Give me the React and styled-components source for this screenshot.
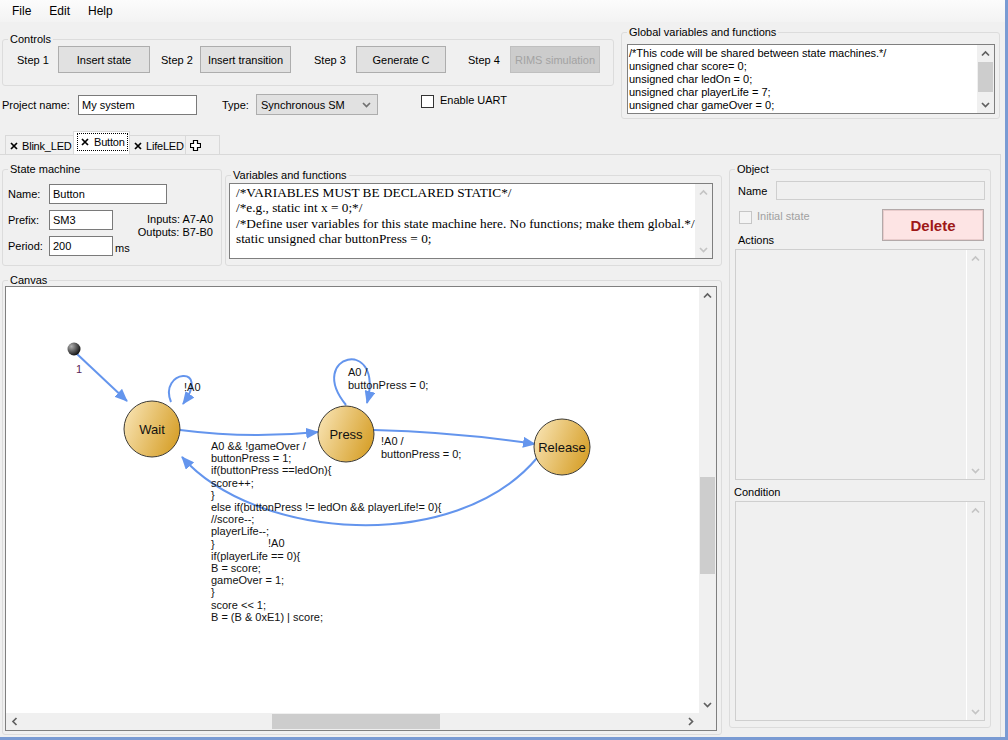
import React from "react";
import styled, { createGlobalStyle } from "styled-components";

const GlobalStyle = createGlobalStyle`
  html, body {
    margin: 0;
    padding: 0;
    background: #f0f0f0;
  }
  body {
    font-family: "Liberation Sans", Arial, sans-serif;
    font-size: 11px;
    color: #000;
  }
`;

const Window = styled.div`
  width: 1008px;
  height: 740px;
  box-sizing: border-box;
  background: #f0f0f0;
  border-right: 3px solid #7a9bd3;
  border-bottom: 3px solid #7a9bd3;
  display: flex;
  flex-direction: column;
  overflow: hidden;
`;

/* menu */
const MenuBar = styled.div`
  height: 22px;
  flex-shrink: 0;
  display: flex;
  align-items: center;
  padding-left: 3px;
  background: linear-gradient(#fcfcfc, #f3f3f3);
  font-size: 12px;
`;

const MenuItem = styled.span`
  padding: 0 9px;
`;

/* group boxes */
const GroupBox = styled.fieldset`
  margin: 0;
  padding: 0;
  min-width: 0;
  flex-shrink: 0;
  box-sizing: border-box;
  border: 1px solid #dcdcdc;
  border-radius: 3px;
`;

const Legend = styled.legend`
  margin-left: 5px;
  padding: 0 2px;
  font-size: 11px;
  line-height: ${p => p.$lh || 13}px;
`;

const ControlsBox = styled(GroupBox)`
  width: 612px;
  height: 53px;
`;

const GlobalBox = styled(GroupBox)`
  width: 379px;
  height: 93px;
  margin: 4px 0 0 7px;
`;

const StateBox = styled(GroupBox)`
  width: 220px;
  height: 103px;
`;

const VarsBox = styled(GroupBox)`
  width: 497px;
  height: 97px;
  margin-top: 6px;
`;

const CanvasGroup = styled(GroupBox)`
  width: 720px;
  height: 460px;
  margin-top: 9px;
`;

const ObjectBox = styled(GroupBox)`
  width: 262px;
  height: 565px;
`;

/* top area */
const TopArea = styled.div`
  height: 109px;
  flex-shrink: 0;
  display: flex;
  padding-left: 2px;
`;

const TopLeft = styled.div`
  width: 612px;
  padding-top: 11px;
  display: flex;
  flex-direction: column;
`;

const StepRow = styled.div`
  display: flex;
  align-items: center;
  height: 27px;
  padding-left: 14px;
`;

const Step = styled.div`
  width: ${p => p.$w}px;
  display: flex;
  align-items: center;
  flex-shrink: 0;
`;

const StepLabel = styled.span`
  width: ${p => p.$w}px;
  flex-shrink: 0;
`;

const Button = styled.button`
  width: ${p => p.$w}px;
  height: 27px;
  padding: 0;
  font-family: inherit;
  font-size: 11px;
  color: #000;
  background: #e1e1e1;
  border: 1px solid #adadad;
  &:disabled {
    background: #cccccc;
    border-color: #bfbfbf;
    color: #a3a3a3;
  }
`;

const ProjectRow = styled.div`
  margin-top: 8px;
  height: 21px;
  display: flex;
  align-items: center;
`;

const FieldLabel = styled.span`
  width: ${p => p.$w}px;
  margin-left: ${p => p.$ml || 0}px;
  flex-shrink: 0;
`;

const TextInput = styled.div`
  box-sizing: border-box;
  width: ${p => p.$w}px;
  height: 20px;
  line-height: 18px;
  padding: 0 3px;
  background: #fff;
  border: 1px solid #7a7a7a;
  white-space: nowrap;
`;

const Select = styled.div`
  box-sizing: border-box;
  width: 122px;
  height: 21px;
  padding: 0 6px 0 4px;
  display: flex;
  align-items: center;
  justify-content: space-between;
  background: #e1e1e1;
  border: 1px solid #adadad;
`;

const CheckBox = styled.span`
  box-sizing: border-box;
  width: 13px;
  height: 13px;
  flex-shrink: 0;
  align-self: flex-start;
  margin: ${p => p.$m || "0"};
  background: ${p => (p.$disabled ? "#f4f4f4" : "#fff")};
  border: 1px solid ${p => (p.$disabled ? "#c6c6c6" : "#333")};
`;

const CheckLabel = styled.span`
  align-self: flex-start;
  line-height: 13px;
  margin-left: ${p => p.$ml || 6}px;
  margin-top: ${p => p.$mt || 0}px;
  color: ${p => (p.$disabled ? "#a0a0a0" : "#000")};
`;

const GroupBody = styled.div`
  padding: ${p => p.$pad};
`;

/* text areas */
const CodeBox = styled.div`
  box-sizing: border-box;
  width: ${p => p.$w}px;
  height: ${p => p.$h}px;
  display: flex;
  background: #fff;
  border: 1px solid #7f7f7f;
  overflow: hidden;
`;

const CodeText = styled.div`
  flex: 1;
  padding: 2px 0 0 1px;
  white-space: pre;
  line-height: 13px;
  overflow: hidden;
`;

const SerifText = styled(CodeText)`
  font-family: "Liberation Serif", "Times New Roman", serif;
  font-size: 13.3px;
  line-height: 15.3px;
  padding: 1px 0 0 6px;
`;

const DisabledBox = styled.div`
  box-sizing: border-box;
  height: ${p => p.$h}px;
  display: flex;
  justify-content: flex-end;
  background: #f0f0f0;
  border: 1px solid #cfcfcf;
`;

/* scrollbars */
const VScroll = styled.div`
  width: 17px;
  flex-shrink: 0;
  display: flex;
  flex-direction: column;
  background: #f0f0f0;
  border-left: ${p => (p.$divider ? "1px solid #fff" : "none")};
`;

const HScroll = styled.div`
  display: flex;
  background: #f0f0f0;
`;

const ArrowCell = styled.div`
  width: 17px;
  height: 17px;
  flex-shrink: 0;
  display: flex;
  align-items: center;
  justify-content: center;
`;

const Track = styled.div`
  flex: 1;
  display: flex;
  flex-direction: ${p => (p.$horizontal ? "row" : "column")};
`;

const VThumb = styled.div`
  margin-top: ${p => p.$offset}px;
  height: ${p => p.$size}px;
  margin-left: 1px;
  width: 15px;
  background: #cdcdcd;
`;

const HThumb = styled.div`
  margin-left: ${p => p.$offset}px;
  width: ${p => p.$size}px;
  margin-top: 1px;
  height: 15px;
  background: #cdcdcd;
`;

const Corner = styled.div`
  background: #f0f0f0;
`;

const Chevron = ({ dir, color = "#606060" }) => {
  const horiz = dir === "left" || dir === "right";
  const pts = {
    up: "1,5.5 4.5,2 8,5.5",
    down: "1,2 4.5,5.5 8,2",
    left: "5.5,1 2,4.5 5.5,8",
    right: "2,1 5.5,4.5 2,8",
  }[dir];
  return (
    <svg width={horiz ? 7 : 9} height={horiz ? 9 : 7} viewBox={horiz ? "0 0 7 9" : "0 0 9 7"}>
      <polyline points={pts} fill="none" stroke={color} strokeWidth="1.7" />
    </svg>
  );
};

/* tabs */
const TabStrip = styled.div`
  height: 23px;
  flex-shrink: 0;
  display: flex;
  align-items: flex-end;
  padding-left: 6px;
`;

const Tab = styled.div`
  box-sizing: border-box;
  width: ${p => p.$w}px;
  height: ${p => (p.$active ? 23 : 19)}px;
  flex-shrink: 0;
  display: flex;
  align-items: center;
  gap: 4px;
  padding: ${p => (p.$active ? "0 0 2px 3px" : "1px 0 0 4px")};
  white-space: nowrap;
  overflow: hidden;
  letter-spacing: -0.2px;
  background: ${p => (p.$active ? "#fff" : "#f0f0f0")};
  border: 1px solid #d9d9d9;
  border-bottom: none;
  margin-left: -1px;
  svg {
    flex-shrink: 0;
  }
`;

const FocusRing = styled.span`
  display: flex;
  align-items: center;
  gap: 5px;
  height: 16px;
  padding: 0 2px 0 3px;
  border: 1px dotted #000;
`;

const CloseIcon = () => (
  <svg width="8" height="8" viewBox="0 0 8 8">
    <path d="M1,1 L7,7 M7,1 L1,7" stroke="#000" strokeWidth="1.7" />
  </svg>
);

const PlusIcon = () => (
  <svg width="11" height="11" viewBox="0 0 11 11">
    <path d="M3.5,0.5 H7.5 V3.5 H10.5 V7.5 H7.5 V10.5 H3.5 V7.5 H0.5 V3.5 H3.5 Z" fill="#fff" stroke="#000" strokeWidth="1.2" />
  </svg>
);

const TabPage = styled.div`
  flex: 1;
  box-sizing: border-box;
  margin-right: 4px;
  padding: 8px 0 0 2px;
  border-top: 1px solid #d9d9d9;
  border-right: 1px solid #d9d9d9;
`;

const TabGrid = styled.div`
  display: grid;
  grid-template-columns: 720px 262px;
  column-gap: 7px;
`;

const LeftCol = styled.div`
  display: flex;
  flex-direction: column;
`;

const TopRow = styled.div`
  display: flex;
  align-items: flex-start;
  gap: 3px;
`;

/* state machine group */
const StateGrid = styled.div`
  display: grid;
  grid-template-columns: 41px 64px 1fr;
  grid-template-rows: 20px 20px 20px;
  row-gap: 6px;
  padding: 8px 8px 0 5px;
`;

const GridLabel = styled.span`
  grid-column: 1;
  align-self: center;
`;

const NameField = styled(TextInput)`
  grid-column: 2 / 4;
`;

const PortInfo = styled.div`
  grid-column: 3;
  grid-row: 2 / 4;
  justify-self: end;
  text-align: right;
  line-height: 13px;
  margin-top: 3px;
`;

const Unit = styled.span`
  grid-column: 3;
  grid-row: 3;
  justify-self: start;
  align-self: center;
  margin: 3px 0 0 2px;
`;

/* canvas */
const CanvasFrame = styled.div`
  box-sizing: border-box;
  width: 712px;
  height: 445px;
  display: grid;
  grid-template-columns: 693px 17px;
  grid-template-rows: 426px 17px;
  background: #fff;
  border: 1px solid #7f7f7f;
`;

/* object group */
const NameRow = styled.div`
  display: flex;
  align-items: center;
`;

const DisabledInput = styled.div`
  flex: 1;
  box-sizing: border-box;
  height: 19px;
  background: #f0f0f0;
  border: 1px solid #cfcfcf;
`;

const OptionsGrid = styled.div`
  margin-top: 9px;
  display: grid;
  grid-template-columns: 1fr auto;
  grid-template-rows: 25px 15px;
`;

const CheckRow = styled.div`
  display: flex;
`;

const SubLabel = styled.div`
  line-height: 13px;
  margin: ${p => p.$m || "0"};
`;

const ActionsLabel = styled(SubLabel)`
  grid-row: 2;
  margin-left: 3px;
`;

const DeleteButton = styled.button`
  grid-column: 2;
  grid-row: 1 / 3;
  align-self: start;
  width: 102px;
  height: 32px;
  margin-right: 1px;
  padding: 0;
  background: #fde4e4;
  border: 1px solid #b3a9a9;
  box-shadow: inset 0 0 0 1px #e9cccc;
  color: #9e1818;
  font: bold 15px "Liberation Sans", Arial, sans-serif;
`;

const steps = [
  { label: "Step 1", text: "Insert state", w: 144, lw: 41, bw: 92 },
  { label: "Step 2", text: "Insert transition", w: 153, lw: 39, bw: 91 },
  { label: "Step 3", text: "Generate C", w: 154, lw: 42, bw: 90 },
  { label: "Step 4", text: "RIMS simulation", w: 132, lw: 42, bw: 90, disabled: true },
];

const globalCode = [
  "/*This code will be shared between state machines.*/",
  "unsigned char score= 0;",
  "unsigned char ledOn = 0;",
  "unsigned char playerLife = 7;",
  "unsigned char gameOver = 0;",
];

const smCode = [
  "/*VARIABLES MUST BE DECLARED STATIC*/",
  "/*e.g., static int x = 0;*/",
  "/*Define user variables for this state machine here. No functions; make them global.*/",
  "static unsigned char buttonPress = 0;",
];

const pressLabel = [
  "A0 && !gameOver /",
  "buttonPress = 1;",
  "if(buttonPress ==ledOn){",
  "score++;",
  "}",
  "else if(buttonPress != ledOn && playerLife!= 0){",
  "//score--;",
  "playerLife--;",
  "}",
  "if(playerLife == 0){",
  "B = score;",
  "gameOver = 1;",
  "}",
  "score << 1;",
  "B = (B & 0xE1) | score;",
];

const states = [
  { name: "Wait", x: 152, y: 429 },
  { name: "Press", x: 346, y: 434 },
  { name: "Release", x: 562, y: 447 },
];

const EDGE = "#6495ed";

const Diagram = () => (
  <svg width="693" height="426" viewBox="6 287 693 426" fontFamily='"Liberation Sans", Arial, sans-serif'>
    <defs>
      <marker id="head" viewBox="0 0 13 11" refX="12" refY="5.5" markerWidth="13" markerHeight="11" markerUnits="userSpaceOnUse" orient="auto">
        <path d="M0,0 L13,5.5 L0,11 Z" fill={EDGE} />
      </marker>
      <linearGradient id="stateFill" x1="0" y1="0.2" x2="1" y2="0.6">
        <stop offset="0" stopColor="#f8e3b2" />
        <stop offset="1" stopColor="#d7a12c" />
      </linearGradient>
      <radialGradient id="initDot" cx="0.3" cy="0.3" r="0.8">
        <stop offset="0" stopColor="#b0b0b0" />
        <stop offset="1" stopColor="#050505" />
      </radialGradient>
    </defs>

    <g fill="none" stroke={EDGE} strokeWidth="2" markerEnd="url(#head)">
      <path d="M77,354 L127,401" />
      <path d="M171,402 C158,370 212,364 183,404" />
      <path d="M180,430 Q250,439 318,432" />
      <path d="M346,405 C305,355 385,335 367,403" />
      <path d="M374,430 Q455,432 535,444" />
      <path d="M537,458 C455,555 255,540 182,457" />
    </g>

    <circle cx="74" cy="349" r="6.5" fill="url(#initDot)" />
    <text x="76" y="373" fontSize="11" fill="#5a2458">1</text>

    {states.map(s => (
      <g key={s.name}>
        <circle cx={s.x} cy={s.y} r="28" fill="url(#stateFill)" stroke="#3c3a34" strokeWidth="1" />
        <text x={s.x} y={s.y + 5} fontSize="13" textAnchor="middle" fill="#111">{s.name}</text>
      </g>
    ))}

    <g fontSize="11" fill="#111">
      <text x="184" y="391">!A0</text>
      <text x="348" y="376">A0 /</text>
      <text x="348" y="389">buttonPress = 0;</text>
      <text x="381" y="445">!A0 /</text>
      <text x="381" y="458">buttonPress = 0;</text>
      <text x="268" y="547">!A0</text>
      <text x="211" y="450">
        {pressLabel.map((line, i) => (
          <tspan key={i} x="211" dy={i === 0 ? 0 : 12.2}>{line}</tspan>
        ))}
      </text>
    </g>
  </svg>
);

export default function App() {
  return (
    <>
      <GlobalStyle />
      <Window>
        <MenuBar>
          <MenuItem>File</MenuItem>
          <MenuItem>Edit</MenuItem>
          <MenuItem>Help</MenuItem>
        </MenuBar>

        <TopArea>
          <TopLeft>
            <ControlsBox>
              <Legend>Controls</Legend>
              <StepRow>
                {steps.map(s => (
                  <Step key={s.label} $w={s.w}>
                    <StepLabel $w={s.lw}>{s.label}</StepLabel>
                    <Button $w={s.bw} disabled={s.disabled}>{s.text}</Button>
                  </Step>
                ))}
              </StepRow>
            </ControlsBox>
            <ProjectRow>
              <FieldLabel $w={76}>Project name:</FieldLabel>
              <TextInput $w={119}>My system</TextInput>
              <FieldLabel $w={34} $ml={25}>Type:</FieldLabel>
              <Select>
                <span>Synchronous SM</span>
                <Chevron dir="down" color="#707070" />
              </Select>
              <CheckBox $m="1px 0 0 43px" />
              <CheckLabel>Enable UART</CheckLabel>
            </ProjectRow>
          </TopLeft>

          <GlobalBox>
            <Legend>Global variables and functions</Legend>
            <GroupBody $pad="5px 0 0 5px">
              <CodeBox $w={368} $h={70}>
                <CodeText>{globalCode.join("\n")}</CodeText>
                <VScroll>
                  <ArrowCell><Chevron dir="up" /></ArrowCell>
                  <Track>
                    <VThumb $offset={0} $size={30} />
                  </Track>
                  <ArrowCell><Chevron dir="down" /></ArrowCell>
                </VScroll>
              </CodeBox>
            </GroupBody>
          </GlobalBox>
        </TopArea>

        <TabStrip>
          <Tab $w={69}><CloseIcon />Blink_LED</Tab>
          <Tab $w={57} $active>
            <FocusRing><CloseIcon />Button</FocusRing>
          </Tab>
          <Tab $w={57}><CloseIcon />LifeLED</Tab>
          <Tab $w={35}><PlusIcon /></Tab>
        </TabStrip>

        <TabPage>
          <TabGrid>
            <LeftCol>
              <TopRow>
                <StateBox>
                  <Legend>State machine</Legend>
                  <StateGrid>
                    <GridLabel>Name:</GridLabel>
                    <NameField $w={118}>Button</NameField>
                    <GridLabel>Prefix:</GridLabel>
                    <TextInput $w={64}>SM3</TextInput>
                    <GridLabel>Period:</GridLabel>
                    <TextInput $w={64}>200</TextInput>
                    <PortInfo>Inputs: A7-A0<br />Outputs: B7-B0</PortInfo>
                    <Unit>ms</Unit>
                  </StateGrid>
                </StateBox>

                <VarsBox>
                  <Legend>Variables and functions</Legend>
                  <GroupBody $pad="1px 0 0 3px">
                    <CodeBox $w={484} $h={76}>
                      <SerifText>{smCode.join("\n")}</SerifText>
                      <VScroll>
                        <ArrowCell><Chevron dir="up" color="#c4c4c4" /></ArrowCell>
                        <Track />
                        <ArrowCell><Chevron dir="down" color="#c4c4c4" /></ArrowCell>
                      </VScroll>
                    </CodeBox>
                  </GroupBody>
                </VarsBox>
              </TopRow>

              <CanvasGroup>
                <Legend $lh={11}>Canvas</Legend>
                <GroupBody $pad="0 0 0 2px">
                  <CanvasFrame>
                    <Diagram />
                    <VScroll>
                      <ArrowCell><Chevron dir="up" /></ArrowCell>
                      <Track>
                        <VThumb $offset={173} $size={97} />
                      </Track>
                      <ArrowCell><Chevron dir="down" /></ArrowCell>
                    </VScroll>
                    <HScroll>
                      <ArrowCell><Chevron dir="left" /></ArrowCell>
                      <Track $horizontal>
                        <HThumb $offset={249} $size={168} />
                      </Track>
                      <ArrowCell><Chevron dir="right" /></ArrowCell>
                    </HScroll>
                    <Corner />
                  </CanvasFrame>
                </GroupBody>
              </CanvasGroup>
            </LeftCol>

            <ObjectBox>
              <Legend>Object</Legend>
              <GroupBody $pad="5px 5px 0 5px">
                <NameRow>
                  <FieldLabel $w={38} $ml={3}>Name</FieldLabel>
                  <DisabledInput />
                </NameRow>
                <OptionsGrid>
                  <CheckRow>
                    <CheckBox $disabled $m="2px 0 0 4px" />
                    <CheckLabel $disabled $ml={5} $mt={1}>Initial state</CheckLabel>
                  </CheckRow>
                  <ActionsLabel>Actions</ActionsLabel>
                  <DeleteButton>Delete</DeleteButton>
                </OptionsGrid>
                <DisabledBox $h={231}>
                  <VScroll $divider>
                    <ArrowCell><Chevron dir="up" color="#c4c4c4" /></ArrowCell>
                    <Track />
                    <ArrowCell><Chevron dir="down" color="#c4c4c4" /></ArrowCell>
                  </VScroll>
                </DisabledBox>
                <SubLabel $m="6px 0 2px -1px">Condition</SubLabel>
                <DisabledBox $h={220}>
                  <VScroll $divider>
                    <ArrowCell><Chevron dir="up" color="#c4c4c4" /></ArrowCell>
                    <Track />
                    <ArrowCell><Chevron dir="down" color="#c4c4c4" /></ArrowCell>
                  </VScroll>
                </DisabledBox>
              </GroupBody>
            </ObjectBox>
          </TabGrid>
        </TabPage>
      </Window>
    </>
  );
}
